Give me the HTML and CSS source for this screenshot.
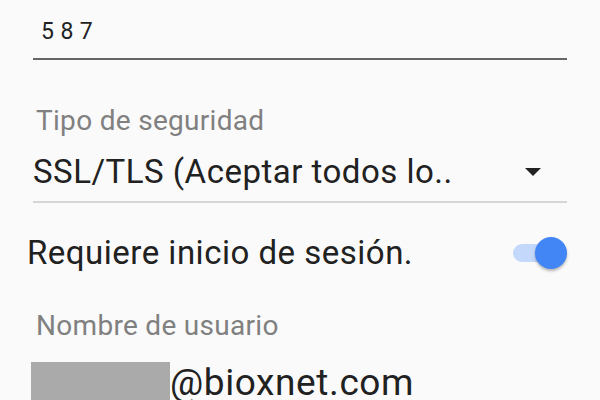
FILE: index.html
```html
<!DOCTYPE html>
<html lang="es">
<head>
<meta charset="utf-8">
<title>Configuración de salida</title>
<link rel="stylesheet" href="styles.css">
</head>
<body>
<main class="settings">
  <div class="field field--port">
    <span class="field__input field__input--port">587</span>
  </div>

  <div class="field field--security">
    <div class="field__label">Tipo de seguridad</div>
    <div class="select">
      <span class="select__value">SSL/TLS (Aceptar todos lo..</span>
      <svg class="select__arrow" width="16" height="8" viewBox="0 0 16 8" aria-hidden="true">
        <polygon points="0,0 16,0 8,8" fill="#222"/>
      </svg>
    </div>
  </div>

  <div class="toggle-row">
    <span class="toggle-row__text">Requiere inicio de sesión.</span>
    <span class="switch" role="switch" aria-checked="true">
      <span class="switch__track"></span>
      <span class="switch__thumb"></span>
    </span>
  </div>

  <div class="field field--user">
    <div class="field__label">Nombre de usuario</div>
    <div class="user-value">
      <span class="user-value__hidden"></span><span class="user-value__domain">@bioxnet.com</span>
    </div>
  </div>
</main>
</body>
</html>
```

FILE: styles.css
```css
html, body {
  margin: 0;
  height: 100%;
  background: #fafafa;
  overflow: hidden;
}

body {
  font-family: Roboto, "Noto Sans", sans-serif;
  color: #212121;
}

.settings {
  padding: 0 33px 0 27px;
}

.field {
  margin-left: 6px;
}

/* Port input with underline */
.field--port {
  padding-top: 20px;
  padding-bottom: 14px;
  border-bottom: 2px solid #666;
}

.field__input--port {
  display: block;
  padding-left: 8px;
  font-size: 23px;
  line-height: 24px;
  letter-spacing: 6.5px;
  color: #222;
}

.field__label {
  padding-left: 3px;
  font-size: 28px;
  line-height: 32px;
  letter-spacing: 0.3px;
  color: #808080;
}

/* Security type dropdown */
.field--security {
  margin-top: 45px;
}

.select {
  display: flex;
  align-items: center;
  justify-content: space-between;
  margin-top: 16px;
  padding-bottom: 10px;
  border-bottom: 2px solid #d6d6d6;
}

.select__value {
  font-size: 33px;
  line-height: 38px;
  letter-spacing: 0.5px;
  white-space: nowrap;
}

.select__arrow {
  display: block;
  margin-right: 26px;
}

/* Login toggle */
.toggle-row {
  display: flex;
  align-items: center;
  justify-content: space-between;
  margin-top: 31px;
}

.toggle-row__text {
  font-size: 33px;
  line-height: 38px;
  letter-spacing: 0.5px;
}

.switch {
  position: relative;
  display: block;
  width: 54px;
  height: 32px;
}

.switch__track {
  position: absolute;
  left: 0;
  top: 7px;
  width: 44px;
  height: 18px;
  border-radius: 9px;
  background: #c4d8fc;
}

.switch__thumb {
  position: absolute;
  right: 0;
  top: 0;
  width: 32px;
  height: 32px;
  border-radius: 50%;
  background: #4285f4;
  box-shadow: 0 2px 3px rgba(0, 0, 0, 0.28);
}

/* User name */
.field--user {
  margin-top: 38px;
}

.user-value {
  display: flex;
  margin-top: 19px;
  margin-left: -2px;
  font-size: 37px;
  line-height: 44px;
  letter-spacing: 0.6px;
}

.user-value__hidden {
  width: 139px;
  height: 44px;
  margin-top: 1px;
  background: #aaaaaa;
}
```
